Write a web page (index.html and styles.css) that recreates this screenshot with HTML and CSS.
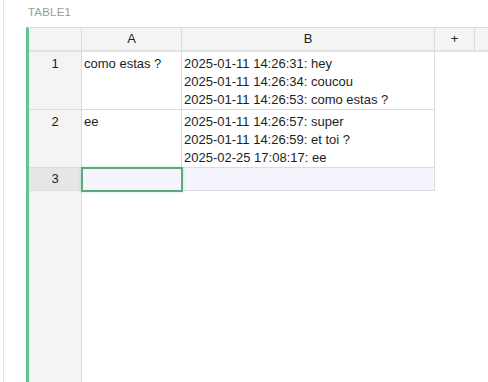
FILE: index.html
```html
<!DOCTYPE html>
<html>
<head>
	<title>Table1</title>
	<link rel="stylesheet" href="styles.css">
</head>
<body>
	<div class="frame">
		<div class="title">TABLE1</div>
		<div class="sheet">
			<!-- header row -->
			<div class="cell head corner"></div>
			<div class="cell head">A</div>
			<div class="cell head">B</div>
			<div class="cell head">+</div>
			<div class="cell head last"></div>

			<!-- row 1 -->
			<div class="cell rownum">1</div>
			<div class="cell data">como estas ?</div>
			<div class="cell data">
				2025-01-11 14:26:31: hey<br>
				2025-01-11 14:26:34: coucou<br>
				2025-01-11 14:26:53: como estas ?
			</div>
			<div class="cell blank"></div>
			<div class="cell blank"></div>

			<!-- row 2 -->
			<div class="cell rownum">2</div>
			<div class="cell data">ee</div>
			<div class="cell data">
				2025-01-11 14:26:57: super<br>
				2025-01-11 14:26:59: et toi ?<br>
				2025-02-25 17:08:17: ee
			</div>
			<div class="cell blank"></div>
			<div class="cell blank"></div>

			<!-- row 3 (active) -->
			<div class="cell rownum active">3</div>
			<div class="cell data current selected"></div>
			<div class="cell data current"></div>
			<div class="cell blank"></div>
			<div class="cell blank"></div>

			<!-- filler -->
			<div class="cell rownum filler"></div>
			<div class="cell blank"></div>
			<div class="cell blank"></div>
			<div class="cell blank"></div>
			<div class="cell blank"></div>
		</div>
	</div>
</body>
</html>
```

FILE: styles.css
```css
* {
	margin: 0;
	padding: 0;
	box-sizing: border-box;
}

html, body {
	height: 100%;
	overflow: hidden;
}

body {
	font-family: "Liberation Sans", Arial, sans-serif;
	font-size: 13px;
	color: #1e1e1e;
	background: #fff;
}

.frame {
	margin-left: 3px;
	height: 100%;
	border-left: 1px solid #e6e6e6;
	display: flex;
	flex-direction: column;
}

.title {
	height: 27px;
	padding: 5px 0 0 24px;
	font-size: 11.5px;
	line-height: 14px;
	color: #9c9c9c;
	letter-spacing: 0.2px;
}

.sheet {
	flex: 1;
	margin-left: 22px;
	border-left: 3px solid #62c58e;
	border-top: 1px solid #dcdcdc;
	display: grid;
	grid-template-columns: 53px 100px 253px 40px 1fr;
	grid-template-rows: 24px 58px 58px 23px 1fr;
}

.cell {
	border-right: 1px solid #dcdcdc;
	border-bottom: 1px solid #dcdcdc;
	line-height: 18px;
}

.head {
	background: #f4f4f4;
	text-align: center;
	line-height: 22px;
	border-bottom: 2px solid #e2e2e2;
}

.head.last {
	border-right: none;
}

.rownum {
	background: #f4f4f4;
	text-align: center;
	padding-top: 3px;
}

.rownum.active {
	background: #e6e6e6;
	padding-top: 2px;
}

.rownum.filler {
	border-bottom: none;
}

.data {
	padding: 3px 2px 0;
	white-space: nowrap;
}

.current {
	background: #f5f4fd;
}

.selected {
	outline: 2px solid #5fa77f;
	outline-offset: -1px;
	box-shadow: 0 0 3px 1px rgba(110, 225, 160, 0.45);
	position: relative;
	z-index: 1;
}

.blank {
	border: none;
	background: #fff;
}
```
